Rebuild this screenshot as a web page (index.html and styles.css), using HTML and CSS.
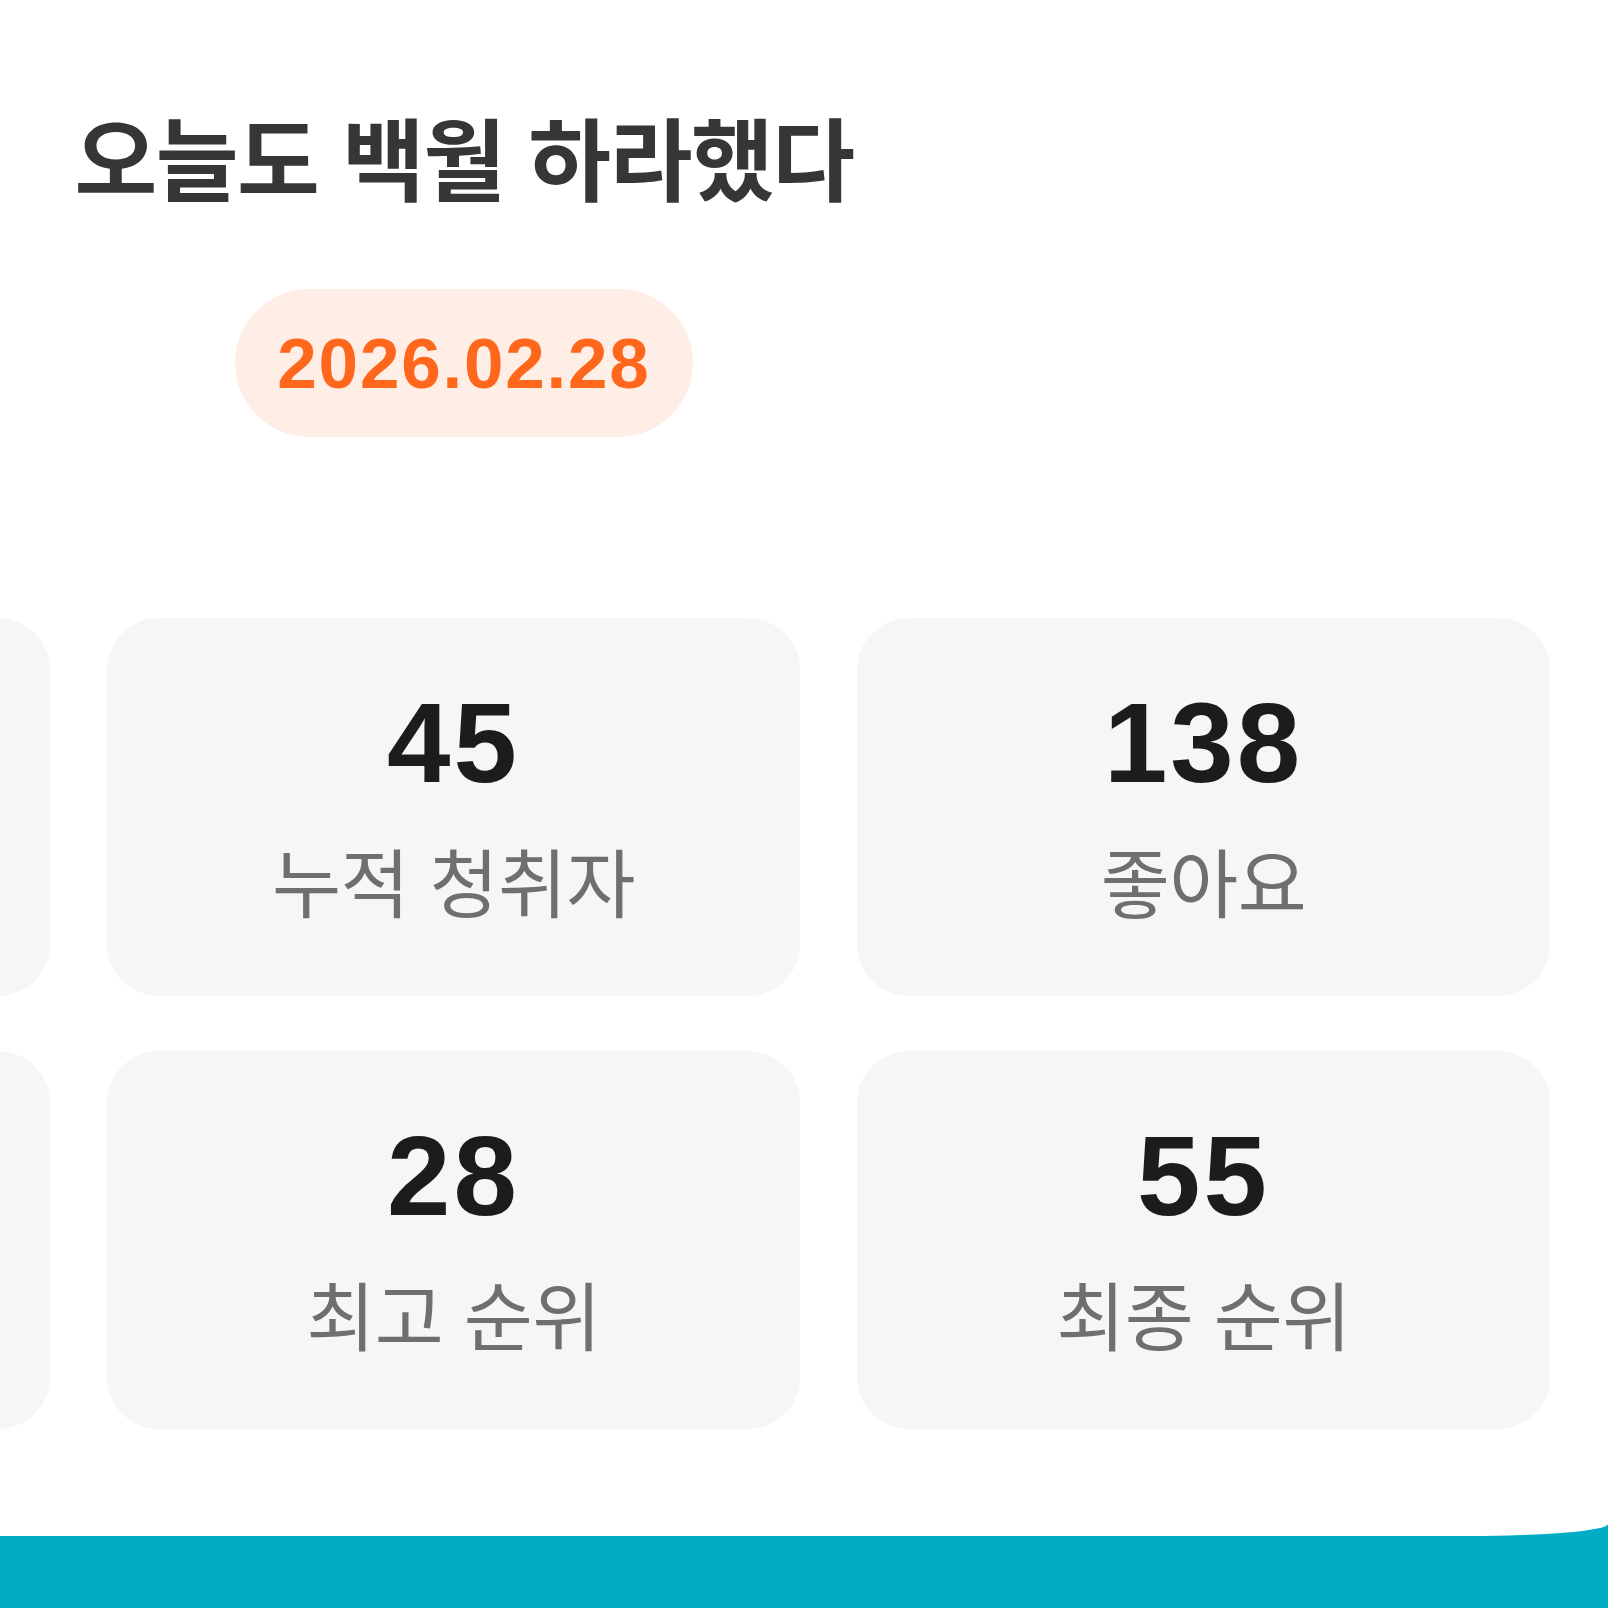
FILE: index.html
```html
<!DOCTYPE html>
<html lang="ko">
<head>
  <meta charset="UTF-8">
  <meta name="viewport" content="width=device-width, initial-scale=1.0">
  <link rel="stylesheet" href="styles.css">
  <title>오늘도 백월 하라했다</title>
</head>
<body>
  <div class="sheet">
    <div class="header">
      <h1 class="title">오늘도 백월 하라했다</h1>
      <div class="date">2026.02.28</div>
    </div>

    <div class="stats">
      <div class="stat"></div>
      <div class="stat">
        <div class="stat-value">45</div>
        <div class="stat-label">누적 청취자</div>
      </div>
      <div class="stat">
        <div class="stat-value">138</div>
        <div class="stat-label">좋아요</div>
      </div>
      <div class="stat"></div>
      <div class="stat">
        <div class="stat-value">28</div>
        <div class="stat-label">최고 순위</div>
      </div>
      <div class="stat">
        <div class="stat-value">55</div>
        <div class="stat-label">최종 순위</div>
      </div>
    </div>
  </div>
  <div class="footer"></div>
</body>
</html>
```

FILE: styles.css
```css
body {
  margin: 0;
  padding: 0;
  background-color: #00adc4;
  font-family: "Noto Sans CJK KR", "Noto Sans", sans-serif;
  overflow: hidden;
}

.sheet {
  background-color: #fff;
  height: 1536px;
  overflow: hidden;
  border-bottom-right-radius: 140px 12px;
}

.header {
  width: 928px;
  padding-top: 110px;
  display: flex;
  flex-direction: column;
  align-items: center;
}

.title {
  margin: 0;
  font-size: 90px;
  font-weight: 700;
  line-height: 1;
  letter-spacing: -1.5px;
  color: #363636;
}

.date {
  margin-top: 89px;
  height: 148px;
  padding: 0 42px;
  display: flex;
  align-items: center;
  border-radius: 74px;
  background-color: #ffeee5;
  color: #ff681c;
  font-family: "Liberation Sans", Arial, sans-serif;
  font-weight: 700;
  font-size: 71px;
  letter-spacing: 1.8px;
}

.stats {
  margin-top: 181px;
  margin-left: -643px;
  display: grid;
  grid-template-columns: repeat(3, 693px);
  grid-auto-rows: 378px;
  column-gap: 57px;
  row-gap: 55px;
}

.stat {
  box-sizing: border-box;
  padding-bottom: 12px;
  background-color: #f6f6f6;
  border-radius: 52px;
  display: flex;
  flex-direction: column;
  align-items: center;
  justify-content: center;
  gap: 42px;
}

.stat-value {
  font-family: "Liberation Sans", Arial, sans-serif;
  font-weight: 700;
  font-size: 114px;
  line-height: 1;
  letter-spacing: 3px;
  color: #1c1c1c;
}

.stat-label {
  font-size: 75px;
  line-height: 1;
  letter-spacing: -0.5px;
  color: #6f6f6f;
}

.footer {
  height: 72px;
}
```
